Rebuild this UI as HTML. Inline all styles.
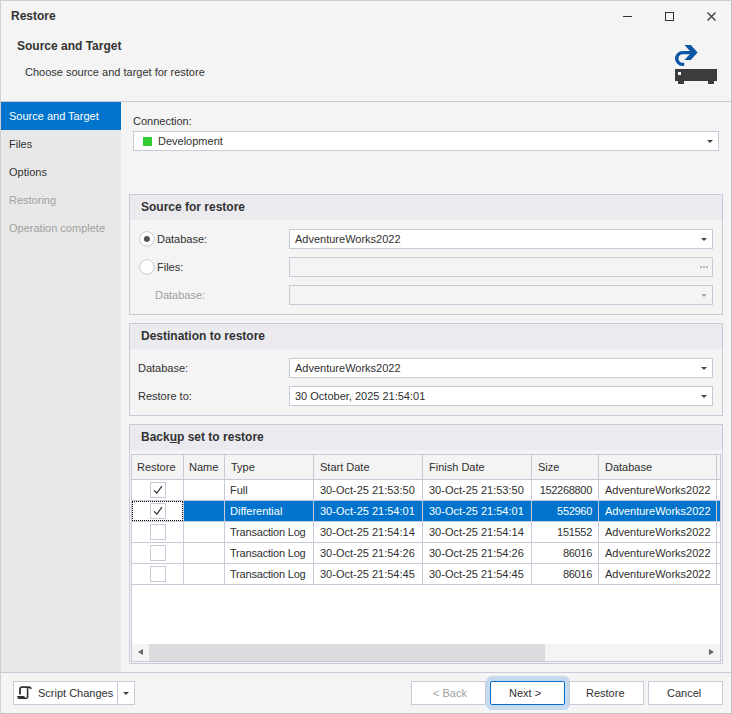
<!DOCTYPE html>
<html><head><meta charset="utf-8">
<style>
*{box-sizing:border-box;margin:0;padding:0}
html,body{width:732px;height:714px;overflow:hidden;background:#f4f4f4}
body{position:relative;font-family:"Liberation Sans",sans-serif;font-size:11px;color:#303030}
.a{position:absolute}
.t{position:absolute;white-space:nowrap;line-height:13px;font-size:11px}
.b{font-weight:bold;font-size:12px;color:#333}
.ln{position:absolute;background:#c9cad9}
.box{position:absolute;border:1px solid #c9cad9}
.wh{background:#fff}
.tri{position:absolute;width:0;height:0;border-left:3.5px solid transparent;border-right:3.5px solid transparent;border-top:3px solid #444}
.g{color:#a0a0a0}
</style></head><body>
<!-- window frame -->
<div class="a" style="left:0;top:0;width:732px;height:714px;border:1px solid #cfcfcf;border-right-color:#c4c4c4;border-bottom-color:#c4c4c4"></div>

<!-- title -->
<div class="t b" style="left:11px;top:10px">Restore</div>
<!-- window controls -->
<div class="a" style="left:623px;top:16px;width:9px;height:1px;background:#333"></div>
<div class="a" style="left:665px;top:12px;width:9px;height:9px;border:1px solid #333"></div>
<svg class="a" style="left:706px;top:11px" width="11" height="11" viewBox="0 0 11 11"><path d="M1.5 1.5L9.5 9.5M9.5 1.5L1.5 9.5" stroke="#333" stroke-width="1.2"/></svg>

<!-- header -->
<div class="t b" style="left:17px;top:40px">Source and Target</div>
<div class="t" style="left:25px;top:66px;color:#333">Choose source and target for restore</div>
<svg class="a" style="left:668px;top:40px" width="56" height="50" viewBox="668 40 56 50">
<path d="M691 52.6 L682.6 52.6 A5.9 5.9 0 0 0 682.6 64.4 L684.2 64.4" fill="none" stroke="#0a55a6" stroke-width="3.4"/>
<path d="M684.5 45 L690.8 45 L697.6 52.5 L690.8 60 L684.5 60 L691.3 52.5 Z" fill="#0a55a6"/>
<rect x="675" y="69" width="42" height="12" fill="#3c3c3c"/>
<rect x="678" y="81" width="6" height="3" fill="#3c3c3c"/>
<rect x="708" y="81" width="6" height="3" fill="#3c3c3c"/>
<rect x="678" y="72" width="3" height="3" fill="#fff"/>
</svg>
<div class="ln" style="left:1px;top:101px;width:730px;height:1px"></div>

<!-- sidebar -->
<div class="a" style="left:1px;top:102px;width:120px;height:570px;background:#e8e8e8"></div>
<div class="a" style="left:1px;top:102px;width:120px;height:28px;background:#0074cc"></div>
<div class="t" style="left:9px;top:110px;color:#fff">Source and Target</div>
<div class="t" style="left:9px;top:138px;color:#333">Files</div>
<div class="t" style="left:9px;top:166px;color:#333">Options</div>
<div class="t g" style="left:9px;top:194px">Restoring</div>
<div class="t g" style="left:9px;top:222px">Operation complete</div>

<!-- connection -->
<div class="t" style="left:133px;top:115px">Connection:</div>
<div class="box wh" style="left:133px;top:131px;width:586px;height:20px"></div>
<div class="a" style="left:143px;top:137px;width:9px;height:9px;background:#33cc33"></div>
<div class="t" style="left:158px;top:135px">Development</div>
<div class="tri" style="left:707px;top:140px"></div>

<!-- group 1 -->
<div class="box" style="left:129px;top:194px;width:594px;height:121px"></div>
<div class="a" style="left:130px;top:195px;width:592px;height:25px;background:#ebebef"></div>
<div class="t b" style="left:141px;top:201px">Source for restore</div>
<svg class="a" style="left:139px;top:231px" width="16" height="16" viewBox="0 0 16 16"><circle cx="7.9" cy="7.9" r="7.3" fill="#fff" stroke="#c9cad9" stroke-width="1"/><circle cx="7.9" cy="7.9" r="3" fill="#555"/></svg>
<div class="t" style="left:157px;top:233px">Database:</div>
<div class="box wh" style="left:289px;top:229px;width:424px;height:20px"></div>
<div class="t" style="left:295px;top:233px">AdventureWorks2022</div>
<div class="tri" style="left:701px;top:238px"></div>
<svg class="a" style="left:139px;top:259px" width="16" height="16" viewBox="0 0 16 16"><circle cx="7.9" cy="7.9" r="7.3" fill="#fff" stroke="#c9cad9" stroke-width="1"/></svg>
<div class="t" style="left:157px;top:261px">Files:</div>
<div class="box" style="left:289px;top:257px;width:424px;height:20px"></div>
<div class="a" style="left:700px;top:266px;width:2px;height:2px;background:#b4b4b4"></div>
<div class="a" style="left:703px;top:266px;width:2px;height:2px;background:#b4b4b4"></div>
<div class="a" style="left:706px;top:266px;width:2px;height:2px;background:#b4b4b4"></div>
<div class="t g" style="left:155px;top:289px">Database:</div>
<div class="box" style="left:289px;top:285px;width:424px;height:20px"></div>
<div class="tri" style="left:701px;top:294px;border-top-color:#aaa"></div>

<!-- group 2 -->
<div class="box" style="left:129px;top:323px;width:594px;height:93px"></div>
<div class="a" style="left:130px;top:324px;width:592px;height:25px;background:#ebebef"></div>
<div class="t b" style="left:141px;top:330px">Destination to restore</div>
<div class="t" style="left:138px;top:362px">Database:</div>
<div class="box wh" style="left:289px;top:358px;width:424px;height:20px"></div>
<div class="t" style="left:295px;top:362px">AdventureWorks2022</div>
<div class="tri" style="left:701px;top:367px"></div>
<div class="t" style="left:138px;top:390px">Restore to:</div>
<div class="box wh" style="left:289px;top:386px;width:424px;height:20px"></div>
<div class="t" style="left:295px;top:390px">30 October, 2025 21:54:01</div>
<div class="tri" style="left:701px;top:395px"></div>

<!-- group 3 -->
<div class="box" style="left:129px;top:424px;width:594px;height:240px"></div>
<div class="a" style="left:130px;top:425px;width:592px;height:25px;background:#ebebef"></div>
<div class="t b" style="left:141px;top:431px">Back<span style="text-decoration:underline">u</span>p set to restore</div>

<!-- grid -->
<div class="box wh" style="left:131px;top:454px;width:590px;height:208px"></div>
<!--GRID-->
<div class="a" style="left:132px;top:455px;width:588px;height:24px;background:#f4f4f4"></div>
<div class="ln" style="left:132px;top:479px;width:588px;height:1px"></div>
<div class="a" style="left:184px;top:501px;width:536px;height:20px;background:#0074cc"></div>
<div class="ln" style="left:132px;top:500px;width:588px;height:1px"></div>
<div class="ln" style="left:132px;top:521px;width:588px;height:1px"></div>
<div class="ln" style="left:132px;top:542px;width:588px;height:1px"></div>
<div class="ln" style="left:132px;top:563px;width:588px;height:1px"></div>
<div class="ln" style="left:132px;top:584px;width:588px;height:1px"></div>
<div class="ln" style="left:183px;top:455px;width:1px;height:130px"></div>
<div class="ln" style="left:224px;top:455px;width:1px;height:130px"></div>
<div class="ln" style="left:313px;top:455px;width:1px;height:130px"></div>
<div class="ln" style="left:422px;top:455px;width:1px;height:130px"></div>
<div class="ln" style="left:531px;top:455px;width:1px;height:130px"></div>
<div class="ln" style="left:598px;top:455px;width:1px;height:130px"></div>
<div class="ln" style="left:716px;top:455px;width:1px;height:130px"></div>
<div class="t" style="left:137px;top:461px">Restore</div>
<div class="t" style="left:189px;top:461px">Name</div>
<div class="t" style="left:231px;top:461px">Type</div>
<div class="t" style="left:320px;top:461px">Start Date</div>
<div class="t" style="left:429px;top:461px">Finish Date</div>
<div class="t" style="left:538px;top:461px">Size</div>
<div class="t" style="left:605px;top:461px">Database</div>
<div class="box wh" style="left:150px;top:482px;width:16px;height:16px"></div>
<svg class="a" style="left:150px;top:482px" width="16" height="16" viewBox="0 0 16 16"><path d="M4.1 8.3 L6.9 11.1 L11.9 4.2" fill="none" stroke="#2a2a2a" stroke-width="1.15"/></svg>
<div class="t" style="left:230px;top:484px;">Full</div>
<div class="t" style="left:320px;top:484px;">30-Oct-25 21:53:50</div>
<div class="t" style="left:429px;top:484px;">30-Oct-25 21:53:50</div>
<div class="t" style="right:140px;top:484px;letter-spacing:-0.3px;">152268800</div>
<div class="t" style="left:605px;top:484px;">AdventureWorks2022</div>
<div class="box wh" style="left:150px;top:503px;width:16px;height:16px"></div>
<svg class="a" style="left:150px;top:503px" width="16" height="16" viewBox="0 0 16 16"><path d="M4.1 8.3 L6.9 11.1 L11.9 4.2" fill="none" stroke="#2a2a2a" stroke-width="1.15"/></svg>
<div class="t" style="left:230px;top:505px; color:#fff;">Differential</div>
<div class="t" style="left:320px;top:505px; color:#fff;">30-Oct-25 21:54:01</div>
<div class="t" style="left:429px;top:505px; color:#fff;">30-Oct-25 21:54:01</div>
<div class="t" style="right:140px;top:505px;letter-spacing:-0.3px; color:#fff;">552960</div>
<div class="t" style="left:605px;top:505px; color:#fff;">AdventureWorks2022</div>
<div class="a" style="left:132px;top:501px;width:51px;height:20px;border:1px dotted #000"></div>
<div class="box wh" style="left:150px;top:524px;width:16px;height:16px"></div>
<div class="t" style="left:230px;top:526px;letter-spacing:-0.2px;">Transaction Log</div>
<div class="t" style="left:320px;top:526px;">30-Oct-25 21:54:14</div>
<div class="t" style="left:429px;top:526px;">30-Oct-25 21:54:14</div>
<div class="t" style="right:140px;top:526px;letter-spacing:-0.3px;">151552</div>
<div class="t" style="left:605px;top:526px;">AdventureWorks2022</div>
<div class="box wh" style="left:150px;top:545px;width:16px;height:16px"></div>
<div class="t" style="left:230px;top:547px;letter-spacing:-0.2px;">Transaction Log</div>
<div class="t" style="left:320px;top:547px;">30-Oct-25 21:54:26</div>
<div class="t" style="left:429px;top:547px;">30-Oct-25 21:54:26</div>
<div class="t" style="right:140px;top:547px;letter-spacing:-0.3px;">86016</div>
<div class="t" style="left:605px;top:547px;">AdventureWorks2022</div>
<div class="box wh" style="left:150px;top:566px;width:16px;height:16px"></div>
<div class="t" style="left:230px;top:568px;letter-spacing:-0.2px;">Transaction Log</div>
<div class="t" style="left:320px;top:568px;">30-Oct-25 21:54:45</div>
<div class="t" style="left:429px;top:568px;">30-Oct-25 21:54:45</div>
<div class="t" style="right:140px;top:568px;letter-spacing:-0.3px;">86016</div>
<div class="t" style="left:605px;top:568px;">AdventureWorks2022</div>
<div class="a" style="left:132px;top:644px;width:588px;height:17px;background:#f4f4f4"></div>
<div class="a" style="left:149px;top:644px;width:396px;height:17px;background:#dcdce0"></div>
<div class="a" style="left:138px;top:649px;width:0;height:0;border-top:3.5px solid transparent;border-bottom:3.5px solid transparent;border-right:5px solid #666"></div>
<div class="a" style="left:709px;top:649px;width:0;height:0;border-top:3.5px solid transparent;border-bottom:3.5px solid transparent;border-left:5px solid #666"></div>
<!--/GRID-->

<!-- footer -->
<div class="ln" style="left:1px;top:672px;width:730px;height:1px"></div>
<div class="box wh" style="left:13px;top:681px;width:122px;height:24px"></div>
<div class="ln" style="left:117px;top:682px;width:1px;height:22px"></div>
<svg class="a" style="left:14px;top:682px" width="22" height="22" viewBox="0 0 22 22"><path d="M5.95 12.6 V7.2 Q5.95 5.1 8 5.1 H15 Q16.8 5.1 16.8 6.9" fill="none" stroke="#333" stroke-width="1.8"/><path d="M13.6 5.5 V14.5" fill="none" stroke="#333" stroke-width="1.6"/><path d="M3.1 14.1 H10 L11.3 15.6 Q12.3 16.3 12.8 15 V14 H14.4 V15 Q14.4 17 12.2 17 H4 Z" fill="#333"/></svg>
<div class="t" style="left:38px;top:687px">Script Changes</div>
<div class="tri" style="left:123px;top:692px"></div>

<div class="a" style="left:486px;top:676px;width:84px;height:34px;border-radius:6px;background:#c5daee"></div>
<div class="box wh" style="left:411px;top:681px;width:75px;height:24px"></div>
<div class="t g" style="left:433px;top:687px">&lt; Back</div>
<div class="a wh" style="left:490px;top:681px;width:75px;height:24px;border:1.5px solid #0a6ccc;border-radius:2px"></div>
<div class="t" style="left:509px;top:687px">Next &gt;</div>
<div class="box wh" style="left:569px;top:681px;width:75px;height:24px"></div>
<div class="t" style="left:586px;top:687px">Restore</div>
<div class="box wh" style="left:648px;top:681px;width:75px;height:24px"></div>
<div class="t" style="left:667px;top:687px">Cancel</div>
</body></html>
